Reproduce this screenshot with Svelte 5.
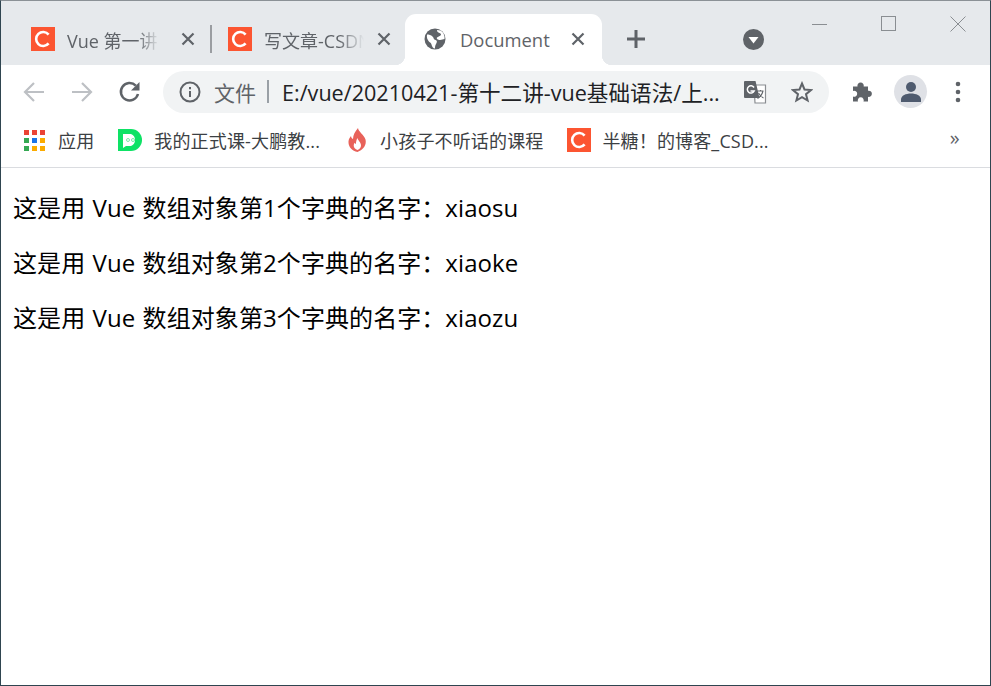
<script>
  const apps = ['#ea4335','#ea4335','#ea4335','#34a853','#1a73e8','#fbab00','#34a853','#fbab00','#fbab00']
  const rows = [
    { n: 1, name: 'xiaosu' },
    { n: 2, name: 'xiaoke' },
    { n: 3, name: 'xiaozu' }
  ]
</script>

{#snippet csdn(size)}
  <svg class="fav" width={size} height={size} viewBox="0 0 24 24">
    <rect width="24" height="24" fill="#fc5531"/>
    <path d="M17.6 7.6A7 7 0 1 0 17.6 16.4" fill="none" stroke="#fff" stroke-width="2.6"/>
  </svg>
{/snippet}

{#snippet close()}
  <svg class="x" width="14" height="14" viewBox="0 0 14 14">
    <path d="M1.5 1.5l11 11M12.5 1.5l-11 11" stroke="#5f6368" stroke-width="2.2"/>
  </svg>
{/snippet}

<div class="window">
  <header class="strip">
    <div class="tab first">
      {@render csdn(24)}
      <span class="title t1">Vue 第一讲</span>
      {@render close()}
    </div>
    <i class="sep"></i>
    <div class="tab second">
      {@render csdn(24)}
      <span class="title t2">写文章-CSDN</span>
      {@render close()}
    </div>
    <div class="tab active">
      <svg class="fav" width="22" height="22" viewBox="0 0 22 22">
        <circle cx="11" cy="11" r="10.5" fill="#5f6368"/>
        <path d="M3 6.5c2 0 4 .5 5.5 2s1 3 3 3.500 1.500 2.500.5 4-1 3.500-1 4.500c-2 0-3-2-3.500-4s-2-2-3-3.500-2-3-1.500-6.500zM13 2c0 2 1 2.500 2.500 3s2 1.500 1 2.500-2.500 1-3.500 2 1 2.500 3 2.500 3-1 4.500-1c.5-3-1-7-4-8.500z" fill="#fff"/>
      </svg>
      <span class="title t3">Document</span>
      {@render close()}
    </div>
    <svg class="plus" width="20" height="20" viewBox="0 0 20 20">
      <path d="M10 1v18M1 10h18" stroke="#5f6368" stroke-width="3"/>
    </svg>
    <svg class="drop" width="21" height="21" viewBox="0 0 21 21">
      <circle cx="10.500" cy="10.500" r="10.500" fill="#5f6368"/>
      <path d="M5.500 8h10l-5 6.500z" fill="#fff"/>
    </svg>
    <div class="controls">
      <svg width="16" height="16" viewBox="0 0 16 16"><path d="M0 8.500h15" stroke="#8a8e92"/></svg>
      <svg width="16" height="16" viewBox="0 0 16 16"><rect x=".5" y=".5" width="14" height="14" fill="none" stroke="#8a8e92"/></svg>
      <svg width="16" height="16" viewBox="0 0 16 16"><path d="M.5.500l15 15M15.500.500l-15 15" stroke="#8a8e92"/></svg>
    </div>
  </header>

  <div class="toolbar">
    <svg class="nav" width="24" height="24" viewBox="0 0 24 24">
      <path d="M22 12H3M12 3l-9 9 9 9" fill="none" stroke="#bdc0c4" stroke-width="2.200"/>
    </svg>
    <svg class="nav" width="24" height="24" viewBox="0 0 24 24">
      <path d="M2 12h19M12 3l9 9-9 9" fill="none" stroke="#bdc0c4" stroke-width="2.200"/>
    </svg>
    <svg class="nav" width="24" height="24" viewBox="0 0 24 24">
      <path d="M20 14a8.700 8.700 0 1 1-2.200-8.300" fill="none" stroke="#5f6368" stroke-width="2.500"/>
      <path d="M21.500 2v8.500H13z" fill="#5f6368"/>
    </svg>
    <div class="omnibox">
      <svg width="22" height="22" viewBox="0 0 22 22">
        <circle cx="11" cy="11" r="9.500" fill="none" stroke="#5f6368" stroke-width="2"/>
        <path d="M11 10v6M11 6v2.200" stroke="#5f6368" stroke-width="2"/>
      </svg>
      <span class="scheme">文件</span>
      <i class="bar"></i>
      <span class="url">E:/vue/20210421-第十二讲-vue基础语法/上...</span>
      <svg class="translate" width="24" height="24" viewBox="0 0 24 24">
        <path d="M11 5h11.500v18H12z" fill="#fff" stroke="#8a8d91" stroke-width="1.200"/>
        <path d="M2 1h10.500l4 17H2a1 1 0 0 1-1-1V2a1 1 0 0 1 1-1z" fill="#5f6368"/>
        <path d="M11 7.500A3.600 3.600 0 1 0 11.200 11H7.500" fill="none" stroke="#fff" stroke-width="1.500"/>
        <path d="M14.500 11h6M17.500 10v1.500M20 11c-1 4-3 6-5.500 7.500M15.500 13c1 2 3 4 5 5" fill="none" stroke="#5f6368" stroke-width="1.100"/>
      </svg>
      <svg class="star" width="22" height="22" viewBox="0 0 22 22">
        <path d="M11 2.500l2.500 6 6.500.5-5 4.200 1.600 6.300L11 16.100l-5.600 3.400L7 13.200 2 9l6.500-.5z" fill="none" stroke="#5f6368" stroke-width="2"/>
      </svg>
    </div>
    <svg class="puzzle" width="22" height="22" viewBox="0 0 22 22">
      <path d="M2 7h4.500a3.200 3.200 0 1 1 6.200 0H17v4.300a3.100 3.100 0 1 1 0 6V22H12.500a3 3 0 1 0-5.500 0H2v-5a3 3 0 1 0 0-5.500z" fill="#5f6368" transform="translate(1 -1.500)"/>
    </svg>
    <div class="avatar">
      <svg width="22" height="22" viewBox="0 0 22 22">
        <circle cx="11" cy="6" r="5" fill="#4f5b6f"/>
        <path d="M1 21v-2.500c0-4 5-6 10-6s10 2 10 6V21z" fill="#4f5b6f"/>
      </svg>
    </div>
    <svg class="dots" width="6" height="22" viewBox="0 0 6 22">
      <circle cx="3" cy="3" r="2.300" fill="#5f6368"/>
      <circle cx="3" cy="11" r="2.300" fill="#5f6368"/>
      <circle cx="3" cy="19" r="2.300" fill="#5f6368"/>
    </svg>
  </div>

  <nav class="bookmarks">
    <div class="mark apps">
      <div class="grid">
        {#each apps as c}<i style="background:{c}"></i>{/each}
      </div>
      <span>应用</span>
    </div>
    <div class="mark dp">
      <svg width="24" height="23" viewBox="0 0 24 23">
        <path d="M0 0h13a11 11 0 0 1 0 22H0z" fill="#0ee265"/>
        <path d="M5 5h8a6.500 6.500 0 0 1 0 12H8l-3 2z" fill="#fff"/>
        <circle cx="10" cy="11" r="1.500" fill="none" stroke="#7be9a8"/>
        <circle cx="15" cy="11" r="1.500" fill="none" stroke="#7be9a8"/>
      </svg>
      <span>我的正式课-大鹏教...</span>
    </div>
    <div class="mark fire">
      <svg width="18" height="24" viewBox="0 0 18 24">
        <path d="M10 0c.5 4 6 6.500 7.500 11.500C19 18 14 22.500 9.500 24 4 23 .2 19 .5 13.500c.2-2.500 1.200-4 2.500-5.500.2 1.500.8 2.500 2 3C5.200 7 7 3.500 10 0z" fill="#e8625a"/>
        <path d="M9.500 10c.3 2.500 3.500 4 3.500 7.500 0 2-1.500 3.800-3.500 4.500-2.300-.7-3.800-2.500-3.800-4.500 0-1 .4-2 1-2.800.2.700.6 1.100 1.200 1.300C8 13.500 8.500 11.500 9.500 10z" fill="#fff"/>
      </svg>
      <span>小孩子不听话的课程</span>
    </div>
    <div class="mark blog">
      {@render csdn(24)}
      <span>半糖！的博客_CSD...</span>
    </div>
    <span class="more">»</span>
  </nav>

  <main class="page">
    {#each rows as r}
      <p>这是用 Vue 数组对象第{r.n}个字典的名字：{r.name}</p>
    {/each}
  </main>
</div>

<style>
  :global(body) {
    margin: 0;
    background: #fff;
  }

  .window {
    box-sizing: border-box;
    width: 991px;
    height: 686px;
    display: flex;
    flex-direction: column;
    border: 1px solid #2f4550;
    border-top-color: #8b9196;
    font-family: "Open Sans", "Noto Sans CJK SC", sans-serif;
    overflow: hidden;
  }

  .strip {
    flex: none;
    height: 64px;
    display: flex;
    align-items: flex-end;
    background: #e6e9ec;
    position: relative;
  }

  .tab {
    height: 51px;
    box-sizing: border-box;
    display: flex;
    align-items: center;
    color: #5f6368;
    font-size: 18px;
    padding-bottom: 2px;
  }

  .title {
    display: block;
    white-space: nowrap;
    overflow: hidden;
    padding-top: 2px;
  }

  .first {
    width: 209px;
    padding-left: 30px;
  }

  .second {
    width: 193px;
    padding-left: 16px;
  }

  .t1 {
    width: 93px;
    margin-left: 12px;
    margin-right: 21px;
    -webkit-mask-image: linear-gradient(to right, #000 75%, transparent);
    mask-image: linear-gradient(to right, #000 75%, transparent);
  }

  .t2 {
    width: 100px;
    margin-left: 12px;
    margin-right: 13px;
    -webkit-mask-image: linear-gradient(to right, #000 75%, transparent);
    mask-image: linear-gradient(to right, #000 75%, transparent);
  }

  .t3 {
    width: 90px;
    margin-left: 14px;
    margin-right: 21px;
    font-size: 18.400px;
  }

  .sep {
    flex: none;
    width: 2px;
    height: 28px;
    background: #9a9da1;
    margin-bottom: 12px;
  }

  .active {
    width: 197px;
    margin-left: 0;
    padding-left: 19px;
    background: #fff;
    border-radius: 11px 11px 0 0;
    position: relative;
  }

  .active::before,
  .active::after {
    content: "";
    position: absolute;
    bottom: 0;
    width: 10px;
    height: 10px;
  }

  .active::before {
    left: -10px;
    background: radial-gradient(circle at 0 0, transparent 10px, #fff 10.5px);
  }

  .active::after {
    right: -10px;
    background: radial-gradient(circle at 100% 0, transparent 10px, #fff 10.5px);
  }

  .fav,
  .x,
  .plus,
  .drop {
    flex: none;
  }

  .plus {
    margin: 0 0 16px 24px;
  }

  .drop {
    margin: 0 0 15px 97px;
  }

  .controls {
    display: flex;
    gap: 53px;
    margin: 0 0 33px 48px;
  }

  .toolbar {
    flex: none;
    height: 53px;
    display: flex;
    align-items: center;
    background: #fff;
    padding-left: 21px;
    box-sizing: border-box;
  }

  .nav {
    flex: none;
    margin-right: 24px;
  }

  .omnibox {
    flex: none;
    box-sizing: border-box;
    width: 666px;
    height: 42px;
    margin-left: -3px;
    padding-left: 16px;
    border-radius: 21px;
    background: #f1f3f4;
    display: flex;
    align-items: center;
  }

  .scheme {
    margin-left: 13px;
    font-size: 21px;
    color: #5f6368;
  }

  .bar {
    width: 2px;
    height: 23px;
    margin: 0 13px 0 11px;
    background: #9aa0a6;
  }

  .url {
    width: 439px;
    font-size: 21.600px;
    color: #202124;
    white-space: nowrap;
    overflow: hidden;
  }

  .translate {
    flex: none;
    margin-left: 22px;
  }

  .star {
    flex: none;
    margin-left: 24px;
  }

  .puzzle {
    flex: none;
    margin-left: 21px;
  }

  .avatar {
    flex: none;
    width: 33px;
    height: 33px;
    margin-left: 22px;
    border-radius: 50%;
    background: #dfe1e6;
    display: flex;
    align-items: center;
    justify-content: center;
  }

  .dots {
    flex: none;
    margin-left: 28px;
  }

  .bookmarks {
    flex: none;
    box-sizing: border-box;
    height: 50px;
    display: flex;
    align-items: center;
    border-bottom: 1px solid #dadce0;
    background: #fff;
    padding: 0 0 5px 23px;
    font-size: 18px;
    letter-spacing: .15px;
    color: #3c4043;
  }

  .mark {
    display: flex;
    align-items: center;
    white-space: nowrap;
  }

  .grid {
    display: grid;
    grid-template-columns: repeat(3, 5px);
    grid-auto-rows: 5px;
    gap: 3px;
    width: 21px;
  }

  .grid i {
    display: block;
  }

  .apps {
    gap: 13px;
  }

  .dp {
    gap: 12px;
    margin-left: 24px;
  }

  .fire {
    gap: 14px;
    margin-left: 28px;
  }

  .blog {
    gap: 11px;
    margin-left: 24px;
  }

  .more {
    margin-left: 181px;
    font-size: 20px;
    line-height: 1;
    margin-bottom: 4px;
    color: #5f6368;
  }

  .page {
    flex: 1;
    background: #fff;
    padding: 24px 0 0 12px;
    color: #000;
    font-size: 24px;
    word-spacing: 1px;
    letter-spacing: .08px;
    font-family: "Open Sans", "Noto Sans CJK SC", sans-serif;
  }

  p {
    margin: 0 0 24px;
    line-height: 31px;
  }
</style>
